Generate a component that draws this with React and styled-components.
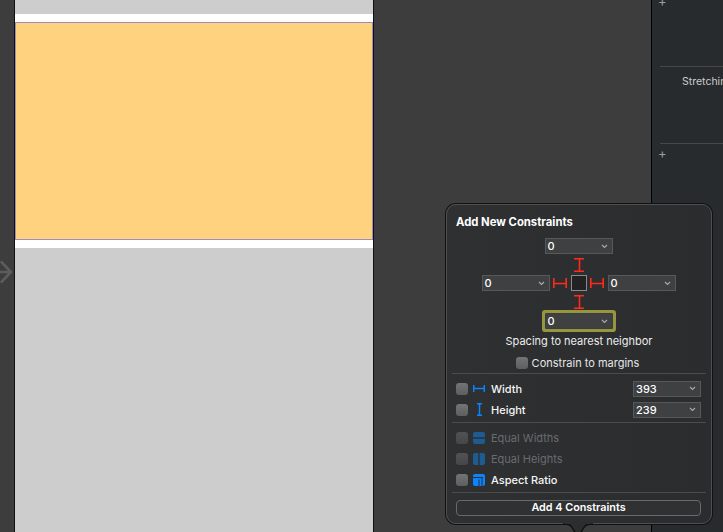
import React from "react";
import styled, { createGlobalStyle } from "styled-components";

const GlobalStyle = createGlobalStyle`
  html, body {
    margin: 0;
    padding: 0;
    background: #3d3d3d;
  }
  * {
    box-sizing: border-box;
  }
`;

const Page = styled.div`
  position: relative;
  display: flex;
  width: 723px;
  height: 532px;
  overflow: hidden;
  background: #3d3d3d;
  font-family: Inter, "Liberation Sans", sans-serif;
`;

const Gutter = styled.div`
  display: flex;
  align-items: flex-start;
  justify-content: flex-end;
  flex: 0 0 14px;
  padding-top: 259px;
  overflow: hidden;
`;

const Phone = styled.div`
  display: flex;
  flex-direction: column;
  flex: 0 0 360px;
  background: #cdcdcd;
  border-left: 1px solid #111;
  border-right: 1px solid #111;
`;

const GrayBar = styled.div`
  height: 14px;
  background: #cdcdcd;
`;

const Stripe = styled.div`
  height: 8px;
  background: #fff;
`;

const Banner = styled.div`
  height: 218px;
  background: #ffd27f;
  border: 1px solid #a08cb8;
`;

const Canvas = styled.div`
  flex: 1;
  background: #3d3d3d;
`;

const Inspector = styled.div`
  display: flex;
  flex-direction: column;
  flex: 0 0 72px;
  background: #282b2e;
  border-left: 1px solid #000;
  padding-left: 8px;
  color: #c9cbcd;
  overflow: hidden;
`;

const Plus = styled.div`
  height: 11px;
  margin-left: -2px;
  font-size: 13px;
  line-height: 11px;
  color: #9a9c9e;
`;

const TopPlus = styled(Plus)`
  margin-top: -4px;
`;

const Rule = styled.div`
  height: 1px;
  background: #45484a;
`;

const FirstRule = styled(Rule)`
  margin-top: 59px;
`;

const StretchLabel = styled.div`
  height: 76px;
  padding: 8px 0 0 22px;
  font-size: 10.5px;
  line-height: 14px;
  white-space: nowrap;
`;

const PopPlus = styled(Plus)`
  margin-top: 4px;
`;

const Popover = styled.div`
  position: absolute;
  left: 446px;
  top: 204px;
  width: 266px;
  height: 320px;
  padding: 0 5px;
  background: linear-gradient(90deg, #2e3032, #2a2c2e);
  border: 1px solid #4d4f51;
  border-radius: 10px;
  box-shadow: 0 0 0 1px #111;
  color: #f2f2f2;
  font-size: 11px;
`;

const Pointer = styled.svg`
  position: absolute;
  left: 116px;
  bottom: -14px;
`;

const Title = styled.div`
  padding: 10px 0 0 4px;
  font-size: 11.3px;
  font-weight: 700;
  line-height: 14px;
  color: #fff;
`;

const Diagram = styled.div`
  display: grid;
  grid-template-columns: 68px 21px 16px 21px 68px;
  grid-template-rows: 16px 21px 16px 22px 16px;
  justify-content: center;
  justify-items: center;
  align-items: center;
  margin: 9px 0 0 -1px;
`;

const Select = styled.div`
  display: flex;
  align-items: center;
  justify-content: space-between;
  width: 68px;
  height: 16px;
  padding: 0 4px 0 2px;
  background: #3e4042;
  border: 1px solid ${(p) => (p.$focused ? "#3a3c3e" : "#56585a")};
  font-size: 11px;
  font-weight: 500;
  color: #fff;
  box-shadow: ${(p) => (p.$focused ? "0 0 0 3px #96963f" : "none")};
  border-radius: ${(p) => (p.$focused ? "1px" : "0")};
`;

const SpanCell = styled.div`
  display: flex;
  grid-column: 1 / 6;
`;

const CenterSquare = styled.div`
  width: 16px;
  height: 16px;
  background: #222;
  border: 1px solid #8a8a8a;
`;

const Caption = styled.div`
  margin-top: 5px;
  text-align: center;
  font-size: 11px;
  line-height: 14px;
  color: #ececec;
`;

const ConstrainRow = styled.div`
  display: flex;
  align-items: center;
  justify-content: center;
  gap: 4px;
  height: 14px;
  margin: 8px 0 3px -3px;
  font-size: 11px;
  color: #e6e6e6;
`;

const Check = styled.div`
  flex: 0 0 12px;
  width: 12px;
  height: 12px;
  border-radius: 3px;
  background: linear-gradient(#727476, #5c5e60);
  opacity: ${(p) => (p.$dim ? 0.5 : 1)};
`;

const Divider = styled.div`
  height: 1px;
  background: #4a4c4e;
`;

const Section = styled.div`
  padding: 4px 5px 2px 4px;
`;

const Row = styled.div`
  display: flex;
  align-items: center;
  height: 21px;
  color: ${(p) => (p.$dim ? "#6a6c6e" : "#f5f5f5")};
  font-weight: ${(p) => (p.$dim ? 400 : 500)};
`;

const IconSlot = styled.div`
  display: flex;
  align-items: center;
  justify-content: center;
  flex: 0 0 12px;
  margin: 0 6px 0 5px;
`;

const RowLabel = styled.div`
  flex: 1;
  font-size: 11px;
`;

const ButtonWrap = styled.div`
  padding: 7px 5px 0 4px;
`;

const AddButton = styled.div`
  height: 16px;
  border: 1px solid #67696b;
  border-radius: 4px;
  background: #2f3133;
  text-align: center;
  font-size: 10.8px;
  font-weight: 600;
  line-height: 14px;
  color: #fff;
`;

const Chevron = () => (
  <svg width="7" height="5" viewBox="0 0 7 5">
    <path d="M1 1l2.500 2.500L6 1" fill="none" stroke="#a8a8a8" strokeWidth="1.200" />
  </svg>
);

const HStrut = () => (
  <svg width="14" height="10" viewBox="0 0 14 10">
    <path d="M.8 0v10M13.200 0v10M0 5.500h14" fill="none" stroke="#ff2a1a" strokeWidth="1.600" />
  </svg>
);

const VStrut = () => (
  <svg width="10" height="14" viewBox="0 0 10 14">
    <path d="M0 .8h10M0 13.200h10M5.500 0v14" fill="none" stroke="#ff2a1a" strokeWidth="1.600" />
  </svg>
);

const WidthIcon = () => (
  <svg width="12" height="7" viewBox="0 0 12 7">
    <path d="M.7 0v7M11.300 0v7M0 3.500h12" fill="none" stroke="#0a84ff" strokeWidth="1.500" />
  </svg>
);

const HeightIcon = () => (
  <svg width="7" height="13" viewBox="0 0 7 13">
    <path d="M1 .7h5M1 12.300h5M3.500 0v13" fill="none" stroke="#0a84ff" strokeWidth="1.500" />
  </svg>
);

const EqualWidthsIcon = () => (
  <svg width="12" height="12" viewBox="0 0 12 12">
    <path d="M2 0h8a2 2 0 0 1 2 2v3.300H0V2a2 2 0 0 1 2-2zM0 6.700h12V10a2 2 0 0 1-2 2H2a2 2 0 0 1-2-2z" fill="#1d5c93" />
  </svg>
);

const EqualHeightsIcon = () => (
  <svg width="12" height="12" viewBox="0 0 12 12">
    <path d="M2 0h3.300v12H2a2 2 0 0 1-2-2V2a2 2 0 0 1 2-2zM6.700 0H10a2 2 0 0 1 2 2v8a2 2 0 0 1-2 2H6.700z" fill="#1d5c93" />
  </svg>
);

const AspectIcon = () => (
  <svg width="12" height="12" viewBox="0 0 12 12">
    <path d="M2 0h8a2 2 0 0 1 2 2v8a2 2 0 0 1-2 2H2a2 2 0 0 1-2-2V2a2 2 0 0 1 2-2z" fill="#0a84ff" />
    <path d="M6 12V5.500M9 12V4M0 3.500h10" fill="none" stroke="#2b2d2f" strokeWidth="1" />
  </svg>
);

const BackArrow = () => (
  <svg width="16" height="26" viewBox="0 0 16 26">
    <path d="M-2 13h14M1 1l11.500 12L1 25" fill="none" stroke="#5c5c5c" strokeWidth="3" />
  </svg>
);

const ValueSelect = ({ value = 0, focused }) => (
  <Select $focused={focused}>
    <span>{value}</span>
    <Chevron />
  </Select>
);

const sizeRows = [
  { label: "Width", icon: <WidthIcon />, value: 393 },
  { label: "Height", icon: <HeightIcon />, value: 239 },
];

const relationRows = [
  { label: "Equal Widths", icon: <EqualWidthsIcon />, dim: true },
  { label: "Equal Heights", icon: <EqualHeightsIcon />, dim: true },
  { label: "Aspect Ratio", icon: <AspectIcon /> },
];

const ConstraintRow = ({ label, icon, dim, children }) => (
  <Row $dim={dim}>
    <Check $dim={dim} />
    <IconSlot>{icon}</IconSlot>
    <RowLabel>{label}</RowLabel>
    {children}
  </Row>
);

const App = () => {
  return (
    <Page>
      <GlobalStyle />
      <Gutter>
        <BackArrow />
      </Gutter>
      <Phone>
        <GrayBar />
        <Stripe />
        <Banner />
        <Stripe />
      </Phone>
      <Canvas />
      <Inspector>
        <TopPlus>+</TopPlus>
        <FirstRule />
        <StretchLabel>Stretching</StretchLabel>
        <Rule />
        <PopPlus>+</PopPlus>
      </Inspector>

      <Popover>
        <Title>Add New Constraints</Title>
        <Diagram>
          <SpanCell>
            <ValueSelect />
          </SpanCell>
          <SpanCell>
            <VStrut />
          </SpanCell>
          <ValueSelect />
          <HStrut />
          <CenterSquare />
          <HStrut />
          <ValueSelect />
          <SpanCell>
            <VStrut />
          </SpanCell>
          <SpanCell>
            <ValueSelect focused />
          </SpanCell>
        </Diagram>
        <Caption>Spacing to nearest neighbor</Caption>
        <ConstrainRow>
          <Check />
          Constrain to margins
        </ConstrainRow>
        <Divider />
        <Section>
          {sizeRows.map((row) => (
            <ConstraintRow key={row.label} label={row.label} icon={row.icon}>
              <ValueSelect value={row.value} />
            </ConstraintRow>
          ))}
        </Section>
        <Divider />
        <Section>
          {relationRows.map((row) => (
            <ConstraintRow key={row.label} label={row.label} icon={row.icon} dim={row.dim} />
          ))}
        </Section>
        <Divider />
        <ButtonWrap>
          <AddButton>Add 4 Constraints</AddButton>
        </ButtonWrap>
        <Pointer width="30" height="14" viewBox="0 0 30 14">
          <path d="M1 0c5 0 7 2 9 5l5 8 5-8c2-3 4-5 9-5z" fill="#2b2d2f" />
          <path d="M0 1c6 0 8 1 10 5l5 8 5-8c2-4 4-5 10-5" fill="none" stroke="#111" strokeWidth="1.500" />
        </Pointer>
      </Popover>
    </Page>
  );
};

export default App;
